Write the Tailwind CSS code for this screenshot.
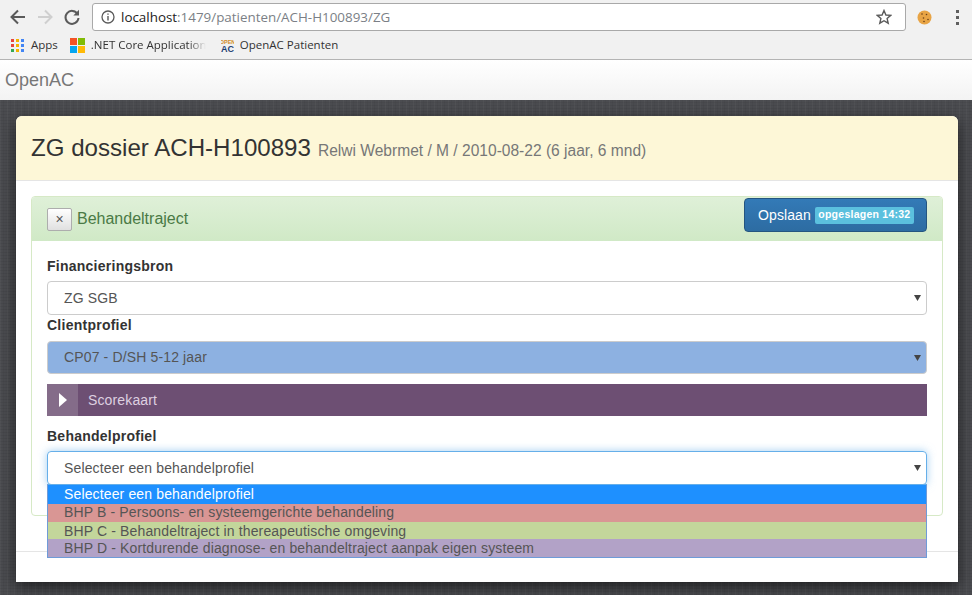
<!DOCTYPE html>
<html lang="nl">
<head>
    <meta charset="UTF-8">
    <meta name="viewport" content="width=device-width, initial-scale=1.0">
    <title>OpenAC</title>
    <script src="https://cdn.jsdelivr.net/npm/@tailwindcss/browser@4"></script>
</head>
<body class="h-[595px] overflow-hidden bg-[#47484c] font-['Liberation_Sans',Arial,sans-serif] text-[14px] text-[#333]">
    <!-- browser chrome -->
    <div class="h-[60px] bg-[#f1f1f1] border-b border-[#b4b4b4] font-['Open_Sans',sans-serif]">
        <div class="h-[31px] flex items-center pt-[3px]">
            <div class="w-[92px] flex items-center pl-[9px] gap-[9px] shrink-0">
                <svg class="w-[18px] h-[18px]" viewBox="0 0 18 18" fill="none" stroke="#5a5a5a" stroke-width="2"><path d="M16 9H3M9 2.500 2.500 9 9 15.500"/></svg>
                <svg class="w-[18px] h-[18px]" viewBox="0 0 18 18" fill="none" stroke="#cfcfcf" stroke-width="2"><path d="M2 9h13M9 2.500 15.500 9 9 15.500"/></svg>
                <svg class="w-[18px] h-[18px]" viewBox="0 0 18 18" fill="none"><path d="M14.600 6A6.500 6.500 0 1 0 15.500 10" stroke="#5a5a5a" stroke-width="2"/><path d="M16 1.800V7.500H10.300Z" fill="#5a5a5a"/></svg>
            </div>
            <div class="w-[814px] h-[28px] bg-white border border-[#a9a9a9] rounded-[3px] flex items-center pl-[8px] pr-[13px]">
                <svg class="w-[14px] h-[14px] shrink-0" viewBox="0 0 14 14" fill="none" stroke="#5a5a5a"><circle cx="7" cy="7" r="6" stroke-width="1.300"/><path d="M7 6v4.500M7 3.500v1.300" stroke-width="1.400"/></svg>
                <span class="ml-[6px] text-[13.400px] text-[#222]">localhost<span class="text-[#7b7f86]">:1479/patienten/ACH-H100893/ZG</span></span>
                <svg class="ml-auto w-[16px] h-[16px]" viewBox="0 0 16 16" fill="none" stroke="#5a5a5a" stroke-width="1.400"><path d="M8 1.500 9.900 6l4.800.4-3.600 3.100 1.100 4.700L8 11.700l-4.200 2.500 1.100-4.700L1.300 6.400 6.100 6Z"/></svg>
            </div>
            <svg class="ml-[11px] w-[15px] h-[15px]" viewBox="0 0 15 15"><circle cx="7.500" cy="7.500" r="7" fill="#e8a445"/><circle cx="5" cy="4" r=".8" fill="#6b3f18"/><circle cx="9.500" cy="4.500" r=".8" fill="#6b3f18"/><circle cx="6.500" cy="8" r=".8" fill="#6b3f18"/><circle cx="11" cy="9.500" r=".8" fill="#6b3f18"/><circle cx="7" cy="11.500" r=".8" fill="#6b3f18"/></svg>
            <div class="ml-[24px] flex flex-col gap-[3px]">
                <div class="w-[3px] h-[3px] bg-[#5f5f5f]"></div>
                <div class="w-[3px] h-[3px] bg-[#5f5f5f]"></div>
                <div class="w-[3px] h-[3px] bg-[#5f5f5f]"></div>
            </div>
        </div>
        <div class="h-[28px] flex items-center text-[11.500px] text-[#333]">
            <div class="ml-[11px] grid grid-cols-3 gap-[2px] w-[13px]">
                <i class="w-[3px] h-[3px] bg-[#e8453c]"></i><i class="w-[3px] h-[3px] bg-[#f4b400]"></i><i class="w-[3px] h-[3px] bg-[#4285f4]"></i>
                <i class="w-[3px] h-[3px] bg-[#e8453c]"></i><i class="w-[3px] h-[3px] bg-[#f4b400]"></i><i class="w-[3px] h-[3px] bg-[#4285f4]"></i>
                <i class="w-[3px] h-[3px] bg-[#34a853]"></i><i class="w-[3px] h-[3px] bg-[#f4b400]"></i><i class="w-[3px] h-[3px] bg-[#4285f4]"></i>
            </div>
            <span class="ml-[7px]">Apps</span>
            <div class="ml-[12px] grid grid-cols-2 gap-[1px] w-[15px]">
                <i class="h-[7px] bg-[#f35325]"></i><i class="h-[7px] bg-[#81bc06]"></i>
                <i class="h-[7px] bg-[#05a6f0]"></i><i class="h-[7px] bg-[#ffba08]"></i>
            </div>
            <span class="ml-[6px] w-[115px] whitespace-nowrap [mask-image:linear-gradient(to_right,black_85%,transparent)]">.NET Core Application</span>
            <svg class="ml-[15px] w-[13px] h-[14px]" viewBox="0 0 13 14"><text x="6.500" y="5.500" text-anchor="middle" font-family="Liberation Sans" font-weight="700" font-size="5.500" fill="#d08a2a">OPEN</text><text x="6.500" y="13.500" text-anchor="middle" font-family="Liberation Sans" font-weight="700" font-size="9" fill="#1c3f73">AC</text></svg>
            <span class="ml-[6px]">OpenAC Patienten</span>
        </div>
    </div>

    <!-- navbar -->
    <div class="h-[40px] bg-gradient-to-b from-white to-[#f3f3f3] flex items-center pl-[5px] text-[18px] text-[#777]">OpenAC</div>

    <!-- page background with the modal on top -->
    <div class="h-[495px] pt-[16px] px-[16px] bg-[#4b4c50] bg-[repeating-linear-gradient(90deg,#ffffff08_0_1px,transparent_1px_3px,#0000000a_3px_4px,transparent_4px_7px),repeating-linear-gradient(0deg,#0000000d_0_1px,transparent_1px_3px)]">
        <div class="relative w-[942px] h-[466px] bg-white rounded-t-[6px] shadow-[0_5px_15px_rgba(0,0,0,0.6)]">
            <div class="h-[65px] bg-[#fdf7d7] border-b border-[#e5e5e5] rounded-t-[6px] pl-[15px] pt-[16px] flex items-baseline">
                <span class="text-[24.100px] leading-[32px] text-[#333]">ZG dossier ACH-H100893</span>
                <span class="ml-[7px] text-[15.570px] text-[#777]">Relwi Webrmet / M / 2010-08-22 (6 jaar, 6 mnd)</span>
            </div>

            <div class="pt-[15px] px-[15px]">
                <div class="h-[320px] border border-[#d6e9c6] rounded-[4px]">
                    <div class="h-[44px] bg-gradient-to-b from-[#dff0d8] to-[#d0e9c6] flex items-center justify-between pl-[15px] pr-[15px] text-[#4a7a45] rounded-t-[3px]">
                        <div class="flex items-center">
                            <div class="w-[25px] h-[23px] bg-gradient-to-b from-white to-[#e0e0e0] border border-[#adadad] rounded-[2px] flex items-center justify-center text-[14px] text-[#555]">×</div>
                            <span class="ml-[5px] text-[16px]">Behandeltraject</span>
                        </div>
                        <div class="h-[34px] w-[183px] -mt-[8px] bg-gradient-to-b from-[#337ab7] to-[#2d6ca2] border border-[#245580] rounded-[4px] flex items-center pl-[13px] text-white tracking-[0.1px]">
                            Opslaan
                            <span class="ml-[4px] w-[99px] h-[17px] bg-[#5bc0de] rounded-[2px] flex items-center justify-center text-[10.500px] font-bold tracking-[0.25px]">opgeslagen 14:32</span>
                        </div>
                    </div>

                    <div class="relative px-[15px] pt-[15px] tracking-[0.14px]">
                        <div class="font-bold tracking-[0.25px] leading-[20px]">Financieringsbron</div>
                        <div class="mt-[5px] h-[34px] border border-[#ccc] rounded-[4px] flex items-center justify-between pl-[16px] pr-[5px] text-[#555]">
                            ZG SGB
                            <svg class="w-[7px] h-[6px]" viewBox="0 0 7 6"><path d="M0 0h7L3.500 6Z" fill="#444"/></svg>
                        </div>
                        <div class="font-bold tracking-[0.25px] leading-[20px]">Clientprofiel</div>
                        <div class="mt-[6px] h-[33px] bg-[#8db1e1] border border-[#ccc] rounded-[4px] flex items-center justify-between pl-[16px] pr-[5px] text-[#555]">
                            CP07 - D/SH 5-12 jaar
                            <svg class="w-[7px] h-[6px]" viewBox="0 0 7 6"><path d="M0 0h7L3.500 6Z" fill="#444"/></svg>
                        </div>
                        <div class="mt-[10px] h-[32px] bg-[#6d4f73] flex items-center text-[#ddd0e0]">
                            <div class="w-[31px] h-full bg-[#846c89] flex items-center justify-center">
                                <svg class="w-[8px] h-[14px]" viewBox="0 0 8 14"><path d="M0 0 8 7 0 14Z" fill="#fff"/></svg>
                            </div>
                            <span class="ml-[10px]">Scorekaart</span>
                        </div>
                        <div class="mt-[10px] font-bold tracking-[0.25px] leading-[20px]">Behandelprofiel</div>
                        <div class="mt-[5px] h-[34px] border border-[#66afe9] rounded-[4px] shadow-[0_0_8px_rgba(102,175,233,0.6)] flex items-center justify-between pl-[16px] pr-[5px] text-[#555]">
                            Selecteer een behandelprofiel
                            <svg class="w-[7px] h-[6px]" viewBox="0 0 7 6"><path d="M0 0h7L3.500 6Z" fill="#444"/></svg>
                        </div>

                        <!-- open dropdown list -->
                        <div class="absolute left-[15px] top-[243px] w-[880px] h-[74px] bg-white border-x border-b border-[#6f9bd8] border-t border-t-[#66afe9] leading-[18px] text-[#555]">
                            <div class="pl-[16px] h-[19px] bg-[#1e90ff] text-white">Selecteer een behandelprofiel</div>
                            <div class="pl-[16px] h-[18px] leading-[17px] bg-[#d99694]">BHP B - Persoons- en systeemgerichte behandeling</div>
                            <div class="pl-[16px] h-[17px] bg-[#c3d69b]">BHP C - Behandeltraject in thereapeutische omgeving</div>
                            <div class="pl-[16px] h-[18px] bg-[#b2a2c7]">BHP D - Kortdurende diagnose- en behandeltraject aanpak eigen systeem</div>
                        </div>
                    </div>
                </div>
            </div>

            <div class="mt-[35px] border-t border-[#e5e5e5]"></div>
        </div>
    </div>
</body>
</html>
